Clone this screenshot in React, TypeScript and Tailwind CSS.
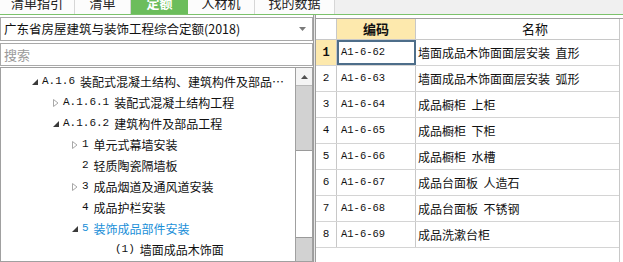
import React from "react";

const CJK = '"Noto Sans CJK SC", "Microsoft YaHei", sans-serif';
const MONO = '"Liberation Mono", "Noto Sans CJK SC", monospace';

type Node = {
  code?: string;
  text: string;
  indent: number;
  tri?: "open" | "closed";
  active?: boolean;
};

const tree: Node[] = [
  { code: "A.1.6", text: "装配式混凝土结构、建筑构件及部品…", indent: 28, tri: "open" },
  { code: "A.1.6.1", text: "装配式混凝土结构工程", indent: 49, tri: "closed" },
  { code: "A.1.6.2", text: "建筑构件及部品工程", indent: 49, tri: "open" },
  { code: "1", text: "单元式幕墙安装", indent: 68, tri: "closed" },
  { code: "2", text: "轻质陶瓷隔墙板", indent: 68 },
  { code: "3", text: "成品烟道及通风道安装", indent: 68, tri: "closed" },
  { code: "4", text: "成品护栏安装", indent: 68 },
  { code: "5", text: "装饰成品部件安装", indent: 68, tri: "open", active: true },
  { code: "(1)", text: "墙面成品木饰面", indent: 101 },
];

const rows = [
  ["A1-6-62", "墙面成品木饰面面层安装  直形"],
  ["A1-6-63", "墙面成品木饰面面层安装  弧形"],
  ["A1-6-64", "成品橱柜  上柜"],
  ["A1-6-65", "成品橱柜  下柜"],
  ["A1-6-66", "成品橱柜  水槽"],
  ["A1-6-67", "成品台面板  人造石"],
  ["A1-6-68", "成品台面板  不锈钢"],
  ["A1-6-69", "成品洗漱台柜"],
];

function Tri({ kind }: { kind?: "open" | "closed" }) {
  if (!kind) return <span className="inline-block w-[12px]" />;
  if (kind === "open")
    return (
      <svg width="12" height="12" viewBox="0 0 12 12" className="shrink-0">
        <polygon points="3,9 9,9 9,3" fill="#3a3a3a" />
      </svg>
    );
  return (
    <svg width="12" height="12" viewBox="0 0 12 12" className="shrink-0">
      <polygon points="3.5,2.5 3.5,9.5 8,6" fill="none" stroke="#a8a8a8" strokeWidth="1" />
    </svg>
  );
}

const tabs = [
  { t: "清单指引", w: "w-[75px]" },
  { t: "清单", w: "w-[56px]" },
  { t: "定额", w: "w-[57px]", active: true },
  { t: "人材机", w: "w-[67px]" },
  { t: "找的数据", w: "w-[80px]" },
];

export default function App() {
  return (
    <div
      className="w-[623px] h-[262px] overflow-hidden bg-white text-[12px] text-[#111]"
      style={{ fontFamily: CJK }}
    >
      {/* tab bar */}
      <div className="h-[15px] overflow-hidden flex bg-[#f0f0f0] border-b border-[#7cc26c]">
        {tabs.map((tab, i) => (
          <div
            key={i}
            className={
              tab.active
                ? `${tab.w} h-[22px] -mt-[8px] flex items-center justify-center bg-[#6cbd5c] text-white font-bold text-[13px]`
                : `${tab.w} h-[22px] -mt-[8px] flex items-center justify-center bg-[#fcfcfc] border-r border-[#d6d6d6] text-[13px] text-[#222]`
            }
          >
            {tab.t}
          </div>
        ))}
      </div>

      <div className="flex h-[247px]">
        {/* left panel */}
        <div className="w-[313px] flex flex-col pt-[2px]">
          <div className="h-[24px] border border-[#a9a9a9] flex items-center pl-[3px] pr-[6px]">
            <span className="flex-1 text-[12.5px] whitespace-nowrap">广东省房屋建筑与装饰工程综合定额(2018)</span>
            <svg width="7" height="4" viewBox="0 0 7 4">
              <polygon points="0,0 7,0 3.5,4" fill="#7a7a7a" />
            </svg>
          </div>
          <div className="h-[23px] mt-[2px] border border-[#a9a9a9] flex items-center pl-[3px] text-[13px] text-[#9a9a9a]">
            搜索
          </div>
          <div className="flex-1 mt-[1px] border border-[#a0a0a0] flex overflow-hidden">
            <div className="flex-1 flex flex-col pt-[3px]">
              {tree.map((n, i) => (
                <div
                  key={i}
                  className="h-[21px] flex items-center whitespace-nowrap"
                  style={{ paddingLeft: n.indent }}
                >
                  <Tri kind={n.tri} />
                  <span
                    className={n.active ? "ml-[1px] text-[11px] text-[#1a8fd8]" : "ml-[1px] text-[11px]"}
                    style={{ fontFamily: MONO }}
                  >
                    {n.code}
                  </span>
                  <span className={n.active ? "ml-[5px] text-[12px] text-[#1a8fd8]" : "ml-[5px] text-[12px]"}>
                    {n.text}
                  </span>
                </div>
              ))}
            </div>
            {/* scrollbar */}
            <div className="w-[17px] flex flex-col border-l border-[#a0a0a0] bg-[#d2d2d2]">
              <div className="h-[18px] bg-[#f4f4f4] border-b border-[#b8b8b8] flex items-center justify-center">
                <svg width="7" height="4" viewBox="0 0 7 4">
                  <polygon points="0,4 7,4 3.5,0" fill="#505050" />
                </svg>
              </div>
              <div className="h-[64px]" />
              <div className="h-[88px] bg-white border-y border-[#9a9a9a]" />
              <div className="flex-1" />
            </div>
          </div>
        </div>

        {/* splitter */}
        <div className="w-[3px] bg-[#e6e6e6] border-x border-[#9c9c9c]" />

        {/* right panel */}
        <div className="w-[307px] flex flex-col pt-[3px]">
          <div className="flex-1 border-t border-[#a0a0a0] flex flex-col">
            <div className="w-[304px] border-r border-[#c8c8c8] flex-1 flex flex-col">
              {/* header */}
              <div className="h-[21px] flex border-b border-[#c8c8c8]">
                <div className="w-[21px] border-r border-[#c8c8c8]" />
                <div className="w-[79px] border-r border-[#c8c8c8] bg-[#fde9ad] flex items-center justify-center font-bold text-[13px]">
                  编码
                </div>
                <div className="flex-1 flex items-center pl-[106px] text-[13px]">名称</div>
              </div>
              {rows.map((r, i) => (
                <div key={i} className="h-[26px] flex border-b border-[#d4d4d4]">
                  <div
                    className={
                      i === 0
                        ? "w-[21px] border-r border-[#c8c8c8] bg-[#fde9ad] flex items-center justify-center font-bold text-[12px]"
                        : "w-[21px] border-r border-[#c8c8c8] flex items-center justify-center text-[11px]"
                    }
                    style={{ fontFamily: MONO }}
                  >
                    {i + 1}
                  </div>
                  <div
                    className={
                      i === 0
                        ? "w-[79px] border-2 border-[#4e6e8a] flex items-center pl-[2px] text-[10.5px]"
                        : "w-[79px] border-r border-[#c8c8c8] flex items-center pl-[4px] text-[10.5px]"
                    }
                    style={{ fontFamily: MONO }}
                  >
                    {r[0]}
                  </div>
                  <div className="flex-1 flex items-center pl-[2px] text-[12px] whitespace-pre">{r[1]}</div>
                </div>
              ))}
              <div className="flex-1" />
            </div>
          </div>
        </div>
      </div>
    </div>
  );
}
